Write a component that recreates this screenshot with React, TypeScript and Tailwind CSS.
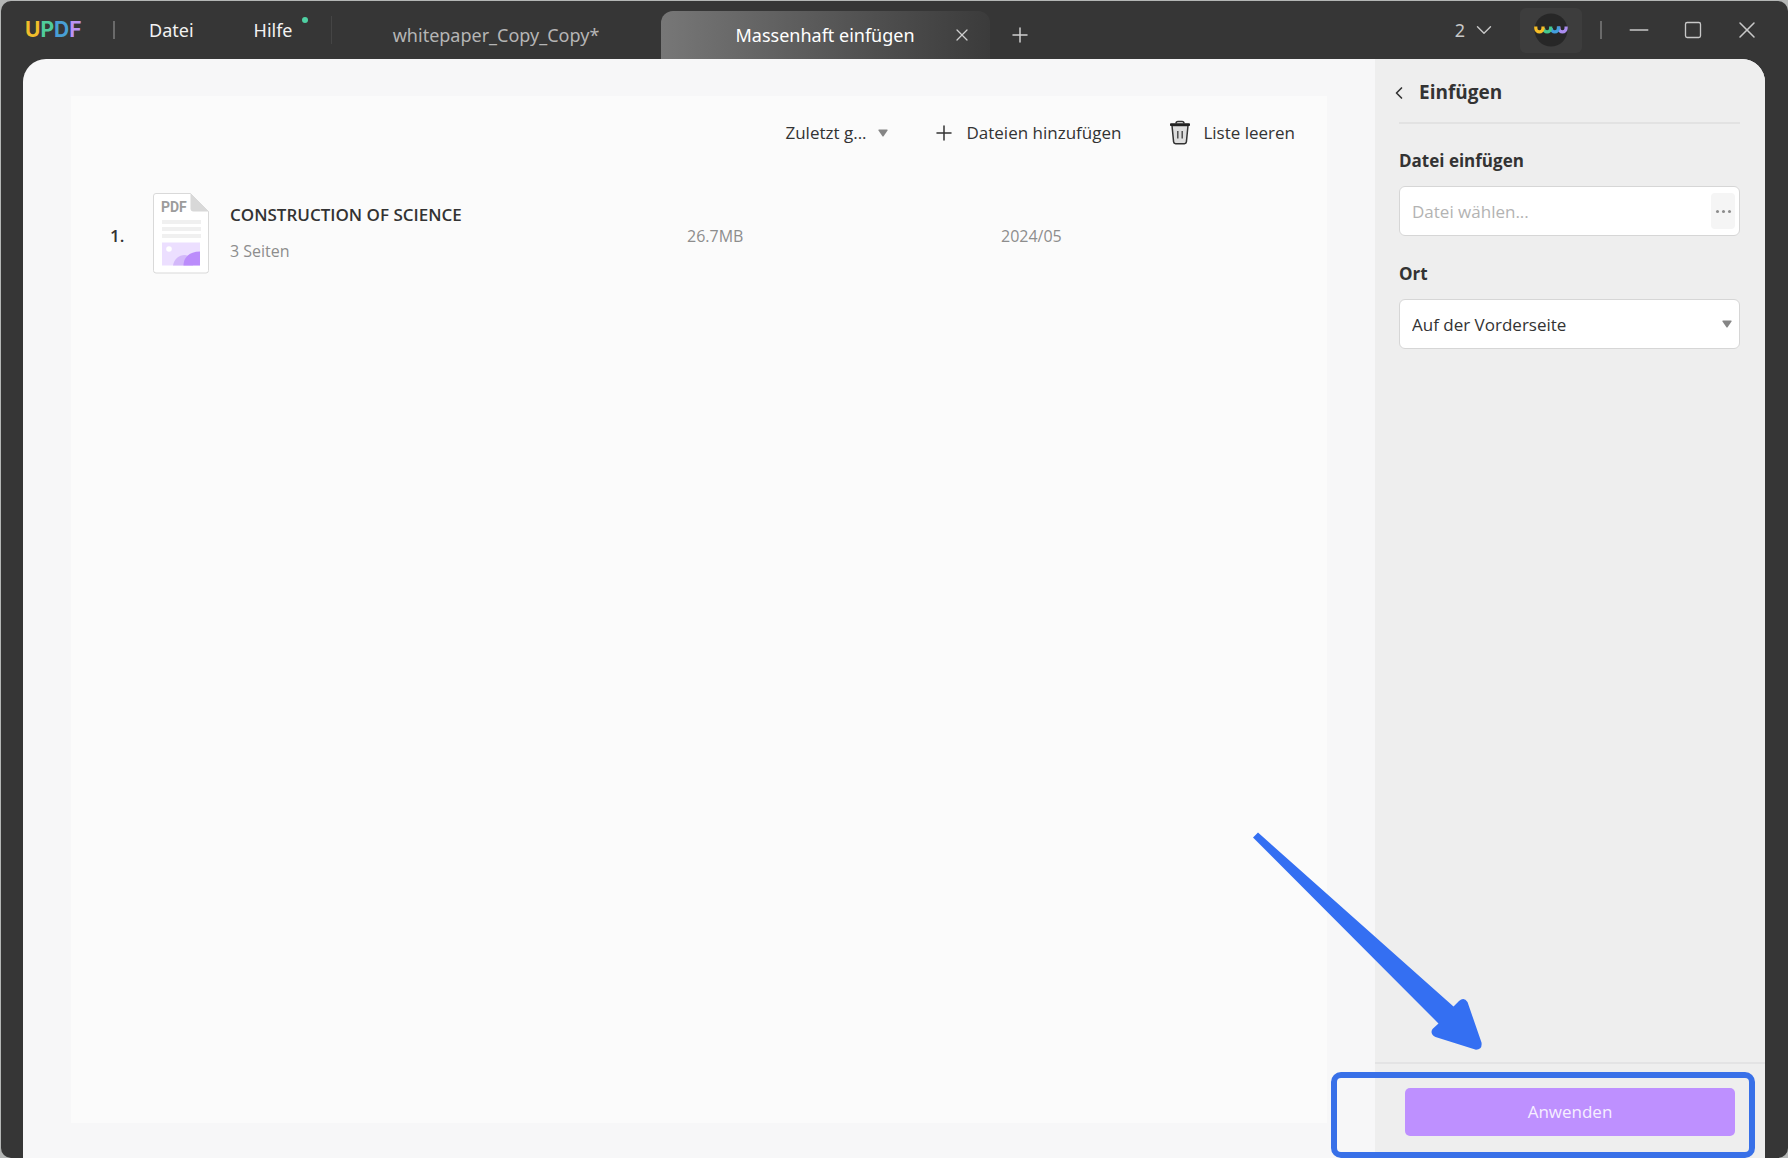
import { useState } from "react";
import { ChevronDown, ChevronLeft, Minus, Plus, Square, X } from "lucide-react";

type InsertFile = {
  id: number;
  name: string;
  pages: string;
  size: string;
  date: string;
};

const FILES: InsertFile[] = [
  {
    id: 1,
    name: "CONSTRUCTION OF SCIENCE",
    pages: "3 Seiten",
    size: "26.7MB",
    date: "2024/05",
  },
];

function Triangle({ className = "" }: { className?: string }) {
  return (
    <svg viewBox="0 0 10 8" className={`h-2 w-2.5 ${className}`} aria-hidden="true">
      <path d="M1 0.5h8a0.7 0.7 0 0 1 0.5 1L5.6 7.2a0.8 0.8 0 0 1-1.2 0L0.5 1.5a0.7 0.7 0 0 1 0.5-1z" fill="#858585" />
    </svg>
  );
}

function TrashIcon() {
  return (
    <svg viewBox="0 0 22 26" className="h-[26px] w-[22px]" fill="none" aria-hidden="true">
      <path d="M3 5.5h16l-1.6 16.4a2 2 0 0 1-2 1.8H6.6a2 2 0 0 1-2-1.8z" fill="#dedede" stroke="#333" strokeWidth="1.5" />
      <path d="M7 3.5a2 2 0 0 1 2-2h4a2 2 0 0 1 2 2" stroke="#333" strokeWidth="1.5" />
      <path d="M1.5 3.8h19v1.7h-19z" fill="#222" stroke="#222" strokeWidth="1" strokeLinejoin="round" />
      <path d="M8.8 11v7.5M13.2 11v7.5" stroke="#444" strokeWidth="1.4" />
    </svg>
  );
}

function PdfIcon() {
  return (
    <svg viewBox="0 0 56 81" className="h-[81px] w-14" aria-hidden="true">
      <path d="M3 0.5h34.5l18 18V77.5a2.5 2.5 0 0 1-2.5 2.5H3A2.5 2.5 0 0 1 0.5 77.5V3A2.5 2.5 0 0 1 3 0.5z" fill="#fff" stroke="#d9d9d9" />
      <path d="M37.5 0.5l18 18h-15a3 3 0 0 1-3-3z" fill="#d8d8d8" />
      <text x="8" y="19" fontFamily="Roboto, sans-serif" fontSize="14" fontWeight="700" fill="#9c9c9c">
        PDF
      </text>
      <path d="M9 27h39v4H9zM9 34h39v4H9zM9 41h39v4H9z" fill="#f0f0f0" />
      <path d="M9 49.5h38v23H9z" fill="#ecdfff" />
      <circle cx="16" cy="56" r="2.8" fill="#fff" />
      <path d="M20 72.5c1-6 5.5-10.5 12-10.5l8 2v8.5z" fill="#d3b8fa" />
      <path d="M30.5 72.5c0-8 6-14 16.5-14v14z" fill="#bb8cfb" />
    </svg>
  );
}

function Avatar() {
  return (
    <svg viewBox="0 0 34 34" className="size-[34px]" fill="none" strokeWidth="3.2" aria-hidden="true">
      <circle cx="17" cy="17" r="16.5" fill="#272727" />
      <path d="M24.9 13.5v1.7a3.6 3.6 0 0 0 7.2 0v-1.7" stroke="#ab8df0" />
      <path d="M17.2 15v0.2a3.6 3.6 0 0 0 7.2 0v-1.7" stroke="#429ddc" />
      <path d="M9.5 15v0.2a3.6 3.6 0 0 0 7.2 0v-1.7" stroke="#45c78f" />
      <path d="M1.8 13.5v1.7a3.6 3.6 0 0 0 7.2 0v-1.7" stroke="#f6bd27" />
    </svg>
  );
}

function TitleBar() {
  return (
    <header
      className="flex h-[58px] shrink-0 items-stretch text-[18px] text-[#f2f2f2]"
      style={{ fontFamily: '"Noto Sans", sans-serif' }}
    >
      <nav className="flex items-center">
        <div className="flex w-[88px] pl-6 text-[21px] leading-5 font-bold" style={{ fontFamily: "Inter, sans-serif" }}>
          <span className="text-[#f0bd2b]">U</span>
          <span className="text-[#50cb9b]">P</span>
          <span className="text-[#489fd5]">D</span>
          <span className="text-[#bb93f5]">F</span>
        </div>
        <span className="ml-6 h-[18px] w-0.5 bg-[#6a6a6a]" />
        <button type="button" className="ml-[34px]">
          Datei
        </button>
        <button type="button" className="relative ml-[60px]">
          Hilfe
          <span className="absolute top-0 -right-[15px] size-1.5 rounded-full bg-[#4fd0a3]" />
        </button>
        <span className="ml-[38px] h-7 w-px bg-[#454545]" />
      </nav>
      <div className="flex items-end">
        <button type="button" className="h-12 w-[329px] text-center text-[#b5b5b5]">
          whitepaper_Copy_Copy*
        </button>
        <div className="flex h-12 w-[329px] items-center rounded-t-xl bg-linear-to-r from-[#777] to-[#3b3b3b]">
          <button type="button" className="flex-1 pl-[38px] text-center text-white">
            Massenhaft einfügen
          </button>
          <button type="button" aria-label="Tab schließen" className="mr-[18px] text-[#cfcfcf]">
            <X size={20} strokeWidth={1.5} />
          </button>
        </div>
        <button type="button" aria-label="Neuer Tab" className="ml-[18px] flex h-12 items-center text-[#cfcfcf]">
          <Plus size={24} strokeWidth={1.5} />
        </button>
      </div>
      <div className="ml-auto flex items-center text-[#c8c8c8]">
        <button type="button" className="flex items-center gap-1.5">
          2
          <ChevronDown size={26} strokeWidth={1.3} />
        </button>
        <button type="button" aria-label="Konto" className="ml-[23px] flex h-[45px] w-[62px] items-center justify-center rounded-md bg-[#3d3d3d]">
          <Avatar />
        </button>
        <span className="ml-[18px] h-[18px] w-0.5 bg-[#6a6a6a]" />
        <button type="button" aria-label="Minimieren" className="ml-[22px]">
          <Minus size={30} strokeWidth={1.2} />
        </button>
        <button type="button" aria-label="Maximieren" className="ml-[29px]">
          <Square size={20} strokeWidth={1.6} />
        </button>
        <button type="button" aria-label="Schließen" className="mr-[27px] ml-[30px]">
          <X size={28} strokeWidth={1.3} />
        </button>
      </div>
    </header>
  );
}

function Toolbar() {
  return (
    <div className="flex items-center justify-end text-[17px] leading-6">
      <div className="relative flex items-center">
        <select aria-label="Sortierung" className="w-[103px] appearance-none bg-transparent">
          <option>Zuletzt g...</option>
        </select>
        <Triangle className="pointer-events-none absolute right-0" />
      </div>
      <button type="button" className="ml-[44px] flex items-center gap-2.5">
        <Plus size={24} strokeWidth={1.5} />
        Dateien hinzufügen
      </button>
      <button type="button" className="ml-12 flex items-center gap-3">
        <TrashIcon />
        Liste leeren
      </button>
    </div>
  );
}

function FileRow({ file, index }: { file: InsertFile; index: number }) {
  return (
    <li className="flex items-center">
      <span className="w-[43px] pt-1 text-[17px] font-semibold">{index + 1}.</span>
      <PdfIcon />
      <div className="ml-[21px] flex w-[457px] flex-col gap-3 pb-0.5">
        <span className="text-[17px] leading-6 font-semibold">{file.name}</span>
        <span className="text-base leading-6 text-[#8d8d8d]">{file.pages}</span>
      </div>
      <span className="w-[314px] pt-1 text-base text-[#8d8d8d]">{file.size}</span>
      <span className="pt-1 text-base text-[#8d8d8d]">{file.date}</span>
    </li>
  );
}

function InsertPanel() {
  const [path, setPath] = useState("");

  return (
    <aside className="flex w-[390px] shrink-0 flex-col bg-[#eee]">
      <div className="flex flex-col pr-[25px] pl-6">
        <div className="flex h-[65px] items-center border-b-2 border-[#e2e2e2] pt-1">
          <button type="button" aria-label="Zurück" className="-ml-2.5">
            <ChevronLeft size={20} strokeWidth={2} />
          </button>
          <h2 className="ml-2.5 text-[19px] font-bold">Einfügen</h2>
        </div>
        <label htmlFor="insert-file" className="mt-[25px] text-[17px] leading-6 font-bold">
          Datei einfügen
        </label>
        <div className="mt-[13px] flex h-[50px] items-center rounded-md border border-[#d6d6d6] bg-white pr-1 pl-3">
          <input
            id="insert-file"
            type="text"
            value={path}
            onChange={(e) => setPath(e.target.value)}
            placeholder="Datei wählen..."
            className="min-w-0 flex-1 pt-0.5 text-[17px] outline-none placeholder:text-[#b3b3b3]"
          />
          <button type="button" aria-label="Durchsuchen" className="flex h-9 w-6 items-center justify-center gap-[3px] rounded-sm bg-[#f5f5f5]">
            <span className="size-[3px] rounded-full bg-[#8c8c8c]" />
            <span className="size-[3px] rounded-full bg-[#8c8c8c]" />
            <span className="size-[3px] rounded-full bg-[#8c8c8c]" />
          </button>
        </div>
        <label htmlFor="insert-position" className="mt-[26px] text-[17px] leading-6 font-bold">
          Ort
        </label>
        <div className="relative mt-[13px] flex items-center">
          <select id="insert-position" className="h-[50px] w-full appearance-none rounded-md border border-[#d6d6d6] bg-white px-3 pt-0.5 text-[17px]">
            <option>Auf der Vorderseite</option>
            <option>Auf der Rückseite</option>
          </select>
          <Triangle className="pointer-events-none absolute right-2" />
        </div>
      </div>
      <div className="relative mt-auto border-t-2 border-[#e3e3e4] px-[30px] pt-6 pb-[22px]">
        <button type="button" className="h-12 w-full rounded-[5px] bg-[#be90ff] text-[17px] text-[#f6efff]">
          Anwenden
        </button>
        <Highlight />
      </div>
    </aside>
  );
}

// Arrow and frame that point at the apply button
function Highlight() {
  return (
    <>
      <div className="pointer-events-none absolute top-2 right-[10px] bottom-0 -left-11 rounded-[10px] border-[6px] border-[#3870e8]" />
      <svg viewBox="0 0 236 224" className="pointer-events-none absolute bottom-[105px] -left-[125px] h-[224px] w-[236px]" aria-hidden="true">
        <path
          d="M3 8.5L8 3.5L203.5 177.5L209 172Q214 167.5 217.5 173L231.5 213.5Q232.5 220.5 226 220.8L185.5 208Q179.5 204.5 182.5 200L188.5 194.5Z"
          fill="#346ff2"
        />
      </svg>
    </>
  );
}

export default function App() {
  return (
    <div
      className="flex min-h-screen flex-col bg-[#b4b6b5] pt-px pl-px text-[#333]"
      style={{ fontFamily: '"Open Sans", "Noto Sans", sans-serif' }}
    >
      <div className="flex flex-1 flex-col rounded-[10px] bg-[#363636]">
        <TitleBar />
        <div className="mr-[23px] ml-[22px] flex flex-1 overflow-hidden rounded-t-[23px] bg-[#f7f7f8]">
          <main className="flex flex-1 px-12 pt-[37px] pb-[35px]">
            <section className="flex-1 bg-[#fbfbfb] pt-6 pr-8 pl-[39px]">
              <Toolbar />
              <ol className="mt-[47px]">
                {FILES.map((file, index) => (
                  <FileRow key={file.id} file={file} index={index} />
                ))}
              </ol>
            </section>
          </main>
          <InsertPanel />
        </div>
      </div>
    </div>
  );
}
